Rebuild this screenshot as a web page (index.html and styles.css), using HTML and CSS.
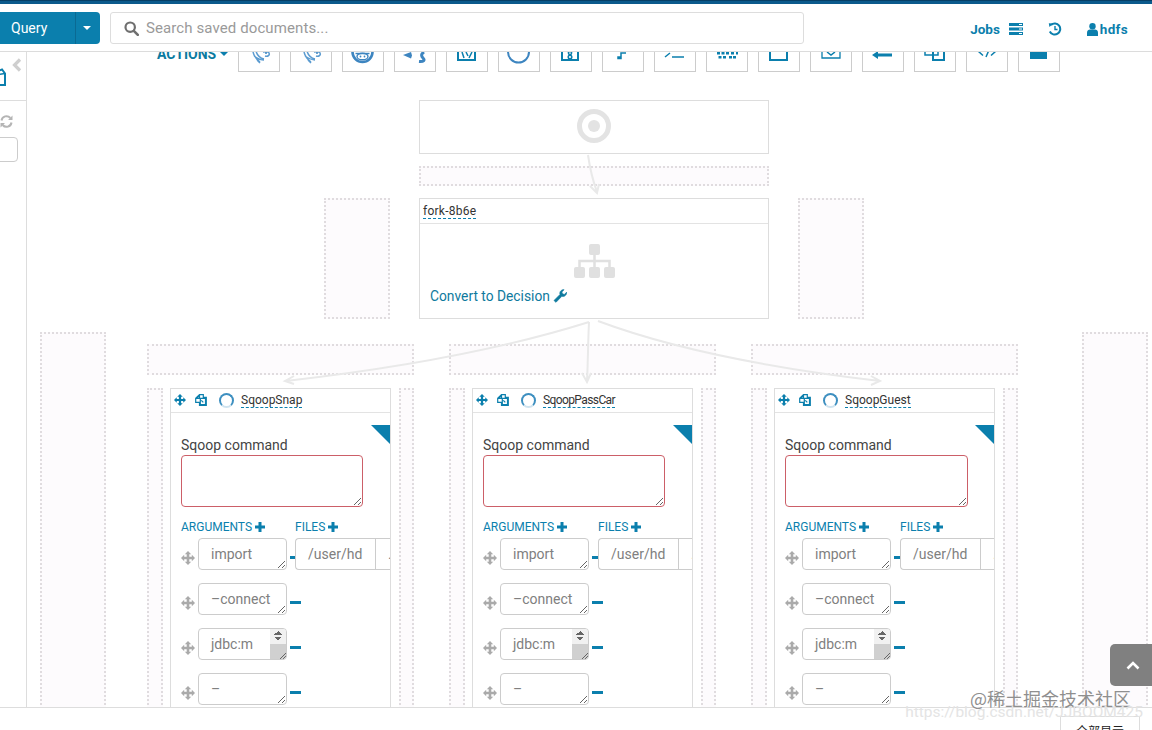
FILE: index.html
```html
<!DOCTYPE html>
<html lang="en">
<head>
<meta charset="utf-8">
<title>Workflow editor</title>
<link rel="stylesheet" href="styles.css">
</head>
<body>
<svg class="defs" width="0" height="0" aria-hidden="true">
  <defs>
    <symbol id="i-move" viewBox="0 0 14 14"><path d="M7 0l3.200 3.200H8.300v2.500h2.500V3.800L14 7l-3.200 3.200V8.300H8.300v2.400h1.900L7 14l-3.200-3.300h1.900V8.300H3.200v1.900L0 7l3.200-3.200v1.900h2.500V3.200H3.800z"/></symbol>
    <symbol id="i-plus" viewBox="0 0 10 10"><path d="M3.500 0h3v3.500H10v3H6.500V10h-3V6.500H0v-3h3.500z"/></symbol>
    <symbol id="i-copy" viewBox="0 0 12 12"><path d="M4.500 .6h3.800v2.800h3v8H4.500v-3H.7V4.300zM4.500 1.500L1.600 4.300h2.900zM5.300 4.300v6.300h5.200V4.300zM8.300 8.300l-2-2" fill="none" stroke="currentColor" stroke-width="1.200"/></symbol>
  </defs>
</svg>

<div class="stripe"></div>

<header class="topbar">
  <div class="query-btn">
    <span class="query-label">Query</span>
    <span class="query-caret"><i class="caret caret--white"></i></span>
  </div>
  <div class="search">
    <svg class="search-icon" viewBox="0 0 15 15"><circle cx="6.200" cy="6.200" r="4.700" fill="none" stroke="#6f6f6f" stroke-width="2.200"/><path d="M9.800 9.800l4 4" stroke="#6f6f6f" stroke-width="2.600" stroke-linecap="round"/></svg>
    <span class="search-text">Search saved documents...</span>
  </div>
  <nav class="topnav">
    <span class="topnav-item">Jobs
      <svg class="jobs-icon" viewBox="0 0 14 12"><path d="M0 0h14v3H0zM0 4.500h14v3H0zM0 9h14v3H0z" fill="currentColor"/><path d="M10 1.500h3M10 6h3M10 10.500h3" stroke="#fff" stroke-width="1"/></svg>
    </span>
    <svg class="history-icon" viewBox="0 0 14 14"><path d="M3 3a5.500 5.500 0 1 1-1.200 6.500" fill="none" stroke="currentColor" stroke-width="2"/><path d="M.8 1.200l4.400 .2-3.800 3.600z" fill="currentColor"/><path d="M7 4v3.500h2.500" fill="none" stroke="currentColor" stroke-width="1.400"/></svg>
    <span class="topnav-item topnav-user">
      <svg class="user-icon" viewBox="0 0 11 13"><circle cx="5.500" cy="3.200" r="3.200" fill="currentColor"/><path d="M0 13V9.500C0 7.500 1.500 6.500 3 6.500h5c1.500 0 3 1 3 3V13z" fill="currentColor"/></svg>
      <span class="user-name">hdfs</span>
    </span>
  </nav>
</header>

<div class="main">
  <aside class="sidebar">
    <div class="side-top">
      <svg class="side-doc" viewBox="0 0 16 18"><path d="M2 5L12 1.500l3 4V17H2z" fill="none" stroke="#0b7fad" stroke-width="2"/><path d="M8 6.500l7-1" fill="none" stroke="#0b7fad" stroke-width="1.500"/></svg>
      <svg class="side-chevron" viewBox="0 0 10 14"><path d="M8 1.500L2.500 7 8 12.500" fill="none" stroke="#cfcfcf" stroke-width="3.200"/></svg>
    </div>
    <svg class="side-refresh" viewBox="0 0 13 13"><path d="M1.500 5.500A5 5 0 0 1 10.300 3M11.500 7.500A5 5 0 0 1 2.700 10" fill="none" stroke="#b5b5b5" stroke-width="2"/><path d="M12.500 .5v4.500H8zM.5 12.500V8H5z" fill="#b5b5b5"/></svg>
    <div class="side-input"></div>
  </aside>

  <section class="workspace">
    <div class="toolbar">
      <span class="actions">ACTIONS <i class="caret caret--teal"></i></span>
      <span class="tool"><svg viewBox="0 0 42 42"><path d="M15 22c1 4 3 7 7 10m-4-11c1 4 4 7 8 8m-10-3c3 2 6 4 10 4m-7 0c1 1 2 2 3 3m3-11c3 0 5-1 6 1s-1 4-4 3" class="tool-soft"/><circle cx="28" cy="23" r="1" class="tool-dot"/></svg></span>
      <span class="tool"><svg viewBox="0 0 42 42"><path d="M14 22c1 4 3 7 7 10m-4-11c1 4 4 7 8 8m-10-3c3 2 6 4 10 4m-7 0c1 1 2 2 3 3m3-11c3 0 5-1 6 1s-1 4-4 3" class="tool-soft"/><circle cx="27" cy="23" r="1" class="tool-dot"/></svg></span>
      <span class="tool"><svg viewBox="0 0 42 42"><circle cx="20.500" cy="22" r="10" class="tool-pig"/><ellipse cx="20.500" cy="26.500" rx="5.500" ry="3.300" class="tool-thin"/><path d="M13.500 23.500h14" class="tool-thin"/><circle cx="18.500" cy="26.500" r=".9" class="tool-dot"/><circle cx="22.500" cy="26.500" r=".9" class="tool-dot"/></svg></span>
      <span class="tool"><svg viewBox="0 0 42 42"><path d="M17 22l-8 3 8 3.500 1-3z" class="tool-dot"/><path d="M30 22c-3 2-3 4-1 6s1 4-4 3.500" class="tool-sqoop"/></svg></span>
      <span class="tool"><svg viewBox="0 0 42 42"><path d="M12 16h17v14H12z" class="tool-line"/><path d="M16 22l2 6m2-6l2 4m4-4l-3 6" class="tool-thin-teal"/></svg></span>
      <span class="tool"><svg viewBox="0 0 42 42"><circle cx="20.500" cy="22" r="10.500" class="tool-arc"/></svg></span>
      <span class="tool"><svg viewBox="0 0 42 42"><path d="M12 14h16v16H12z" class="tool-line"/><circle cx="20" cy="23" r="1.600" class="tool-thin-teal"/><circle cx="20" cy="27" r="1.800" class="tool-thin-teal"/></svg></span>
      <span class="tool"><svg viewBox="0 0 42 42"><path d="M16 27h3v-4h5m-8 4v1.500h3V27z" class="tool-thin-teal"/></svg></span>
      <span class="tool"><svg viewBox="0 0 42 42"><path d="M11 27l5-4m2 4h12" class="tool-thin-teal"/></svg></span>
      <span class="tool"><svg viewBox="0 0 42 42"><path d="M11 22h3v2.500h-3zM15.500 22h3v2.500h-3zM20 22h3v2.500h-3zM25 22h3v2.500h-3zM30 22h2v2.500h-2zM12.500 26h3v2.500h-3zM17 26h3v2.500h-3zM23 26h3v2.500h-3zM27 26h3v2.500h-3z" class="tool-dot-teal"/></svg></span>
      <span class="tool"><svg viewBox="0 0 42 42"><path d="M12 14h17v16H12z" class="tool-line"/></svg></span>
      <span class="tool"><svg viewBox="0 0 42 42"><path d="M12 14h18v14H12z" class="tool-line-thin"/><path d="M17 22l4 3 4-3" class="tool-thin-teal"/></svg></span>
      <span class="tool"><svg viewBox="0 0 42 42"><path d="M15 23.500h15v3H15zM16 21v8l-6-4z" class="tool-dot-teal"/></svg></span>
      <span class="tool"><svg viewBox="0 0 42 42"><path d="M11 14h13v11H11z" class="tool-thin-teal"/><path d="M19 20h11v10H19z" class="tool-line"/></svg></span>
      <span class="tool"><svg viewBox="0 0 42 42"><path d="M12 21l5 4.500M30 21l-5 4.500M23 20l-3 7" class="tool-thin-teal"/></svg></span>
      <span class="tool"><svg viewBox="0 0 42 42"><path d="M12 14h17v15H12z" class="tool-dot-teal"/></svg></span>
    </div>

    <div class="canvas">
      <div class="node start-node">
        <svg class="target-icon" viewBox="0 0 34 34"><circle cx="17" cy="17" r="14.500" fill="none" stroke="#e3e3e3" stroke-width="5"/><circle cx="17" cy="17" r="6" fill="#e3e3e3"/></svg>
      </div>
      <div class="drop drop--after-start"></div>
      <div class="drop drop--fork-left"></div>
      <div class="drop drop--fork-right"></div>
      <div class="drop drop--far-left"></div>
      <div class="drop drop--far-right"></div>

      <div class="node fork-node">
        <div class="node-head fork-head"><span class="node-title node-title--fork">fork-8b6e</span></div>
        <div class="fork-body">
          <svg class="fork-icon" viewBox="0 0 41 34"><g fill="#e0e0e0"><rect x="15" width="11" height="11" rx="2"/><rect y="23" width="11" height="11" rx="2"/><rect x="15" y="23" width="11" height="11" rx="2"/><rect x="30" y="23" width="11" height="11" rx="2"/></g><path d="M20.500 10v13M5.500 23v-6h30v6" fill="none" stroke="#e0e0e0" stroke-width="2.500"/></svg>
          <div class="convert">Convert to Decision
            <svg class="wrench" viewBox="0 0 14 14"><path d="M1 11.500L7 5.500C6.300 3 8 .5 11 .7L8.800 3 9.500 4.800 11.300 5.500 13.600 3.200C13.800 6.200 11.200 8 8.800 7.300L3 13.300z" fill="currentColor" stroke="currentColor" stroke-width=".7"/></svg>
          </div>
        </div>
      </div>

      <div class="branch branch--a">
        <div class="drop drop--branch-top"></div>
        <div class="branch-row">
          <div class="drop drop--side-l"></div>
          <article class="node card">
            <div class="node-head card-head">
              <svg class="head-move"><use href="#i-move"/></svg>
              <svg class="head-copy"><use href="#i-copy"/></svg>
              <span class="head-status"></span>
              <span class="node-title">SqoopSnap</span>
            </div>
            <div class="card-body">
              <i class="corner"></i>
              <div class="field-label">Sqoop command</div>
              <textarea class="command"></textarea>
              <div class="columns">
                <div class="col-args">
                  <div class="col-label">ARGUMENTS <svg class="plus"><use href="#i-plus"/></svg></div>
                  <div class="arg-row"><svg class="grip"><use href="#i-move"/></svg><textarea class="arg">import</textarea><i class="minus"></i></div>
                  <div class="arg-row"><svg class="grip"><use href="#i-move"/></svg><textarea class="arg">–connect</textarea><i class="minus"></i></div>
                  <div class="arg-row"><svg class="grip"><use href="#i-move"/></svg><span class="arg-wrap"><textarea class="arg arg--scroll">jdbc:mysql://hadoop001:3306/test</textarea><i class="fake-scroll"></i></span><i class="minus"></i></div>
                  <div class="arg-row"><svg class="grip"><use href="#i-move"/></svg><textarea class="arg">–</textarea><i class="minus"></i></div>
                </div>
                <div class="col-files">
                  <div class="col-label">FILES <svg class="plus"><use href="#i-plus"/></svg></div>
                  <div class="file-group"><span class="file-input">/user/hd</span><span class="file-more">...</span></div>
                </div>
              </div>
            </div>
          </article>
          <div class="drop drop--side-r"></div>
        </div>
      </div>

      <div class="branch branch--b">
        <div class="drop drop--branch-top"></div>
        <div class="branch-row">
          <div class="drop drop--side-l"></div>
          <article class="node card">
            <div class="node-head card-head">
              <svg class="head-move"><use href="#i-move"/></svg>
              <svg class="head-copy"><use href="#i-copy"/></svg>
              <span class="head-status"></span>
              <span class="node-title node-title--tight">SqoopPassCar</span>
            </div>
            <div class="card-body">
              <i class="corner"></i>
              <div class="field-label">Sqoop command</div>
              <textarea class="command"></textarea>
              <div class="columns">
                <div class="col-args col-args--wide">
                  <div class="col-label">ARGUMENTS <svg class="plus"><use href="#i-plus"/></svg></div>
                  <div class="arg-row"><svg class="grip"><use href="#i-move"/></svg><textarea class="arg">import</textarea><i class="minus"></i></div>
                  <div class="arg-row"><svg class="grip"><use href="#i-move"/></svg><textarea class="arg">–connect</textarea><i class="minus"></i></div>
                  <div class="arg-row"><svg class="grip"><use href="#i-move"/></svg><span class="arg-wrap"><textarea class="arg arg--scroll">jdbc:mysql://hadoop001:3306/test</textarea><i class="fake-scroll"></i></span><i class="minus"></i></div>
                  <div class="arg-row"><svg class="grip"><use href="#i-move"/></svg><textarea class="arg">–</textarea><i class="minus"></i></div>
                </div>
                <div class="col-files">
                  <div class="col-label">FILES <svg class="plus"><use href="#i-plus"/></svg></div>
                  <div class="file-group"><span class="file-input">/user/hd</span><span class="file-more">...</span></div>
                </div>
              </div>
            </div>
          </article>
          <div class="drop drop--side-r"></div>
        </div>
      </div>

      <div class="branch branch--c">
        <div class="drop drop--branch-top"></div>
        <div class="branch-row">
          <div class="drop drop--side-l"></div>
          <article class="node card">
            <div class="node-head card-head">
              <svg class="head-move"><use href="#i-move"/></svg>
              <svg class="head-copy"><use href="#i-copy"/></svg>
              <span class="head-status"></span>
              <span class="node-title">SqoopGuest</span>
            </div>
            <div class="card-body">
              <i class="corner"></i>
              <div class="field-label">Sqoop command</div>
              <textarea class="command command--wide"></textarea>
              <div class="columns">
                <div class="col-args col-args--wide">
                  <div class="col-label">ARGUMENTS <svg class="plus"><use href="#i-plus"/></svg></div>
                  <div class="arg-row"><svg class="grip"><use href="#i-move"/></svg><textarea class="arg">import</textarea><i class="minus"></i></div>
                  <div class="arg-row"><svg class="grip"><use href="#i-move"/></svg><textarea class="arg">–connect</textarea><i class="minus"></i></div>
                  <div class="arg-row"><svg class="grip"><use href="#i-move"/></svg><span class="arg-wrap"><textarea class="arg arg--scroll">jdbc:mysql://hadoop001:3306/test</textarea><i class="fake-scroll"></i></span><i class="minus"></i></div>
                  <div class="arg-row"><svg class="grip"><use href="#i-move"/></svg><textarea class="arg">–</textarea><i class="minus"></i></div>
                </div>
                <div class="col-files">
                  <div class="col-label">FILES <svg class="plus"><use href="#i-plus"/></svg></div>
                  <div class="file-group"><span class="file-input">/user/hd</span><span class="file-more">...</span></div>
                </div>
              </div>
            </div>
          </article>
          <div class="drop drop--side-r"></div>
        </div>
      </div>

      <svg class="edges" viewBox="27 72 1125 635">
        <path d="M588 155c2 14 5 26 9 37M590 186l7 7 2-9"/>
        <path d="M589 322C500 350 400 368 286 381M294 376l-9 5 9 3"/>
        <path d="M589 322c-1 20-1 40-2 59M582 373l5 9 4-9"/>
        <path d="M598 321c80 30 180 48 282 60M871 376l9 5-9 4"/>
      </svg>
    </div>
  </section>
</div>

<footer class="footer">
  <span class="show-all">全部显示</span>
</footer>

<button class="back-top" aria-label="Back to top"><svg viewBox="0 0 14 10"><path d="M1.500 8.500L7 3l5.500 5.500" fill="none" stroke="#fff" stroke-width="2.600"/></svg></button>
<div class="watermark">
  <div class="wm-main">@稀土掘金技术社区</div>
  <div class="wm-url">https://blog.csdn.net/JJBOOM425</div>
</div>
</body>
</html>
```

FILE: styles.css
```css
* { box-sizing: border-box; }

html, body { margin: 0; padding: 0; }

body {
  position: relative;
  display: flex;
  flex-direction: column;
  width: 1152px;
  height: 730px;
  overflow: hidden;
  background: #fff;
  color: #444;
  font-family: Roboto, "Liberation Sans", sans-serif;
  font-size: 14px;
}

.defs { position: absolute; }

.stripe {
  flex: none;
  height: 4px;
  background: #0b5a8c;
  border-top: 1px solid #063f66;
}

.topbar {
  flex: none;
  display: flex;
  align-items: flex-start;
  height: 48px;
  padding-top: 8px;
  border-bottom: 1px solid #dcdcdc;
  background: #fff;
}

.query-btn {
  display: flex;
  width: 100px;
  height: 32px;
  border-radius: 0 4px 4px 0;
  background: #0b7fad;
  color: #fff;
}

.query-label {
  width: 75px;
  padding-left: 11px;
  line-height: 33px;
  font-size: 14px;
}

.query-caret {
  display: flex;
  flex: 1;
  align-items: center;
  justify-content: center;
  padding-right: 2px;
  border-left: 1px solid #0a6a93;
}

.caret {
  display: inline-block;
  width: 0;
  height: 0;
  border-left: 4px solid transparent;
  border-right: 4px solid transparent;
}

.caret--white { border-top: 4px solid #fff; }

.caret--teal {
  border-left-width: 4.500px;
  border-right-width: 4.500px;
  border-top: 4px solid #0b7fad;
  margin-left: 0;
  vertical-align: 3px;
}

.search {
  display: flex;
  align-items: center;
  width: 694px;
  height: 32px;
  margin-left: 10px;
  padding-left: 13px;
  border: 1px solid #ddd;
  border-radius: 3px;
}

.search-icon { width: 15px; height: 15px; }

.search-text {
  margin-left: 7px;
  color: #9a9a9a;
  font-size: 15px;
  letter-spacing: .1px;
}

.topnav {
  display: flex;
  align-items: center;
  height: 34px;
  margin-left: auto;
  padding-right: 24px;
  color: #0b7fad;
  font-size: 13.500px;
  font-weight: 700;
}

.topnav-item { display: flex; align-items: center; }

.jobs-icon { width: 14px; height: 12px; margin-left: 9px; }

.history-icon { width: 14px; height: 14px; margin-left: 25px; }

.topnav-user { margin-left: 25px; }

.user-icon { width: 11px; height: 13px; margin-right: 2px; }

.user-name { letter-spacing: .3px; }

.main {
  flex: 1;
  display: flex;
  min-height: 0;
  overflow: hidden;
}

.sidebar {
  flex: none;
  width: 27px;
  overflow: hidden;
  border-right: 1px solid #ddd;
}

.side-top {
  display: flex;
  align-items: flex-start;
  height: 49px;
  border-bottom: 1px solid #ddd;
}

.side-doc { flex: none; width: 16px; height: 18px; margin: 16px 0 0 -10px; }

.side-chevron { flex: none; width: 10px; height: 14px; margin: 6px 0 0 6px; }

.side-refresh { display: block; width: 13px; height: 13px; margin-top: 14px; }

.side-input {
  width: 23px;
  height: 25px;
  margin: 9px 0 0 -5px;
  border: 1px solid #ccc;
  border-radius: 4px;
}

.workspace {
  flex: 1;
  display: flex;
  flex-direction: column;
  min-width: 0;
}

.toolbar {
  flex: none;
  display: flex;
  align-items: flex-end;
  gap: 10px;
  height: 20px;
  padding-left: 211px;
  overflow: hidden;
  position: relative;
}

.actions {
  position: absolute;
  left: 130px;
  top: -8px;
  color: #0b7a9f;
  font-size: 14px;
  font-weight: 700;
  line-height: 20px;
  white-space: nowrap;
}

.tool {
  flex: none;
  width: 42px;
  height: 42px;
  border: 1px solid #ccc;
  border-top: 0;
  background: #fff;
}

.tool svg { display: block; width: 42px; height: 42px; margin-left: -1px; fill: none; }

.tool-soft { stroke: #5b9bd0; stroke-width: 1.500; fill: none; }
.tool-pig { stroke: #3d85c0; stroke-width: 2.600; fill: none; }
.tool-arc { stroke: #3d85c0; stroke-width: 2; fill: none; }
.tool-sqoop { stroke: #3d85c0; stroke-width: 3; fill: none; }
.tool-thin { stroke: #3d85c0; stroke-width: 1.400; fill: none; }
.tool-dot { fill: #3d85c0; }
.tool-line { stroke: #0b7fad; stroke-width: 2; fill: none; }
.tool-line-thin { stroke: #0b7fad; stroke-width: 1.300; fill: none; }
.tool-thin-teal { stroke: #0b7fad; stroke-width: 1.500; fill: none; }
.tool-dot-teal { fill: #0b7fad; }

.canvas {
  position: relative;
  flex: 1;
  min-height: 0;
  overflow: hidden;
}

.node {
  border: 1px solid #ddd;
  background: #fff;
}

.drop {
  border: 2px dotted #e0dcdf;
  background: #fdfbfd;
}

.start-node {
  position: absolute;
  left: 392px;
  top: 28px;
  display: flex;
  align-items: center;
  justify-content: center;
  width: 350px;
  height: 54px;
  padding-bottom: 2px;
}

.target-icon { width: 34px; height: 34px; }

.drop--after-start { position: absolute; left: 392px; top: 94px; width: 350px; height: 20px; }
.drop--fork-left { position: absolute; left: 297px; top: 126px; width: 66px; height: 121px; }
.drop--fork-right { position: absolute; left: 771px; top: 126px; width: 66px; height: 121px; }
.drop--far-left { position: absolute; left: 13px; top: 260px; width: 66px; height: 420px; }
.drop--far-right { position: absolute; left: 1055px; top: 260px; width: 66px; height: 420px; }

.fork-node {
  position: absolute;
  left: 392px;
  top: 126px;
  width: 350px;
  height: 121px;
}

.node-head {
  display: flex;
  align-items: center;
  border-bottom: 1px solid #e3e3e3;
}

.fork-head { height: 25px; padding-left: 3px; }

.node-title {
  border-bottom: 1px dashed #0b7fad;
  color: #333;
  font-size: 12px;
  line-height: 14px;
}

.node-title--fork { letter-spacing: .25px; }

.node-title--tight { letter-spacing: -.6px; }

.fork-body {
  display: flex;
  flex-direction: column;
  padding: 20px 10px 0;
}

.fork-icon { align-self: center; width: 41px; height: 34px; }

.convert {
  display: flex;
  align-items: center;
  gap: 3px;
  margin-top: 9px;
  color: #0e7a9e;
  font-size: 13.800px;
  line-height: 18px;
}

.wrench { width: 14px; height: 14px; }

.branch {
  position: absolute;
  top: 272px;
  display: flex;
  flex-direction: column;
  gap: 13px;
  width: 267px;
}

.branch--a { left: 120px; }
.branch--b { left: 422px; }
.branch--c { left: 724px; }

.drop--branch-top { height: 31px; }

.branch-row { display: flex; align-items: flex-start; }

.drop--side-l { flex: none; width: 16px; height: 340px; margin-right: 7px; }

.drop--side-r { flex: none; width: 15px; height: 340px; margin-left: 8px; }

.card {
  flex: none;
  width: 221px;
  height: 340px;
  overflow: hidden;
}

.card-head { height: 24px; padding-bottom: 1px; color: #0b7fad; }

.head-move { width: 12px; height: 12px; margin-left: 3px; fill: #0b7fad; }

.head-copy { width: 12px; height: 12px; margin-left: 9px; fill: #0b7fad; }

.head-status {
  width: 15px;
  height: 15px;
  margin: 0 7px 0 12px;
  border: 2px solid #cfe3ef;
  border-top-color: #3d8fc0;
  border-right-color: #3d8fc0;
  border-left-color: #3d8fc0;
  border-radius: 50%;
}

.card-body {
  position: relative;
  padding: 22px 0 0 10px;
}

.corner {
  position: absolute;
  right: 0;
  top: 12px;
  width: 0;
  height: 0;
  border-top: 19px solid #0b7fad;
  border-left: 19px solid transparent;
}

.field-label {
  height: 20px;
  color: #444;
  font-size: 14px;
  line-height: 20px;
}

.command {
  display: block;
  width: 182px;
  height: 52px;
  margin: 0;
  border: 1px solid #cc5f68;
  border-radius: 4px;
  background: #fff;
  outline: 0;
}

.command--wide { width: 183px; }

.columns {
  display: flex;
  align-items: flex-start;
  margin-top: 11px;
}

.col-args { flex: none; width: 114px; }

.col-args--wide { width: 115px; }

.col-label {
  display: flex;
  align-items: center;
  gap: 3px;
  height: 18px;
  margin-bottom: 2px;
  color: #0b7fad;
  font-size: 12px;
  white-space: nowrap;
}

.plus { width: 10px; height: 10px; fill: #0b7fad; }

.arg-row {
  display: flex;
  align-items: flex-start;
  height: 32px;
  margin-bottom: 13px;
}

.grip { flex: none; width: 14px; height: 14px; margin: 13px 3px 0 0; fill: #aaa; }

.arg {
  flex: none;
  display: block;
  width: 89px;
  height: 32px;
  margin: 0;
  padding: 5px 12px;
  border: 1px solid #ccc;
  border-radius: 4px;
  background: #fff;
  color: #808080;
  font-family: Roboto, "Liberation Sans", sans-serif;
  font-size: 14px;
  line-height: 20px;
  outline: 0;
}

.arg-wrap {
  position: relative;
  flex: none;
  display: block;
  width: 89px;
  height: 32px;
}

.arg--scroll {
  padding: 3px 28px 0 12px;
  line-height: 24px;
  overflow: hidden;
}

.fake-scroll {
  position: absolute;
  right: 1px;
  top: 1px;
  width: 16px;
  height: 30px;
  border-radius: 0 3px 3px 0;
  background:
    linear-gradient(135deg, transparent 72%, #666 72%, #666 76%, transparent 76%, transparent 86%, #666 86%, #666 90%, transparent 90%) right bottom / 12px 12px no-repeat,
    linear-gradient(to bottom right, transparent 50%, #666 50%) 4px 2px / 4px 4px no-repeat,
    linear-gradient(to bottom left, transparent 50%, #666 50%) 8px 2px / 4px 4px no-repeat,
    linear-gradient(to top right, transparent 50%, #666 50%) 4px 8px / 4px 4px no-repeat,
    linear-gradient(to top left, transparent 50%, #666 50%) 8px 8px / 4px 4px no-repeat,
    linear-gradient(#f1f1f1 15px, #d0d0d0 15px);
}

.minus {
  flex: none;
  width: 11px;
  height: 3px;
  margin: 18px 0 0 3px;
  background: #0b7fad;
}

.col-files { flex: none; width: 110px; }

.file-group {
  display: flex;
  height: 32px;
  border: 1px solid #ccc;
  border-right: 0;
  border-radius: 4px 0 0 4px;
  background: #fff;
  color: #808080;
  line-height: 30px;
}

.file-input {
  flex: none;
  width: 80px;
  padding-left: 12px;
  border-right: 1px solid #ccc;
}

.file-more { flex: none; padding-left: 12px; }

.edges {
  position: absolute;
  left: 0;
  top: 0;
  width: 1125px;
  height: 635px;
  fill: none;
  stroke: #e9e9e9;
  stroke-width: 2;
  pointer-events: none;
}

.footer {
  flex: none;
  display: flex;
  justify-content: flex-end;
  height: 23px;
  padding: 8px 12px 0 0;
  overflow: hidden;
  border-top: 1px solid #ddd;
  background: #fff;
}

.show-all {
  flex: none;
  width: 80px;
  height: 30px;
  padding-top: 7px;
  border: 1px solid #ddd;
  color: #222;
  font-family: "Noto Sans CJK SC", sans-serif;
  font-size: 12px;
  line-height: 14px;
  text-align: center;
}

.back-top {
  position: absolute;
  right: 0;
  top: 644px;
  display: flex;
  align-items: center;
  justify-content: center;
  width: 42px;
  height: 42px;
  padding: 0 0 0 4px;
  border: 0;
  border-radius: 5px 0 0 5px;
  background: #808080;
}

.back-top svg { width: 14px; height: 10px; }

.watermark {
  position: absolute;
  right: 9px;
  top: 688px;
  text-align: right;
  pointer-events: none;
}

.wm-main {
  margin-right: 12px;
  color: #8f8f8f;
  font-family: "Noto Sans CJK SC", sans-serif;
  font-size: 18px;
  line-height: 20px;
}

.wm-url {
  margin-top: -5px;
  color: #e4e4e4;
  font-family: Roboto, sans-serif;
  font-size: 15.500px;
  line-height: 18px;
}
```
